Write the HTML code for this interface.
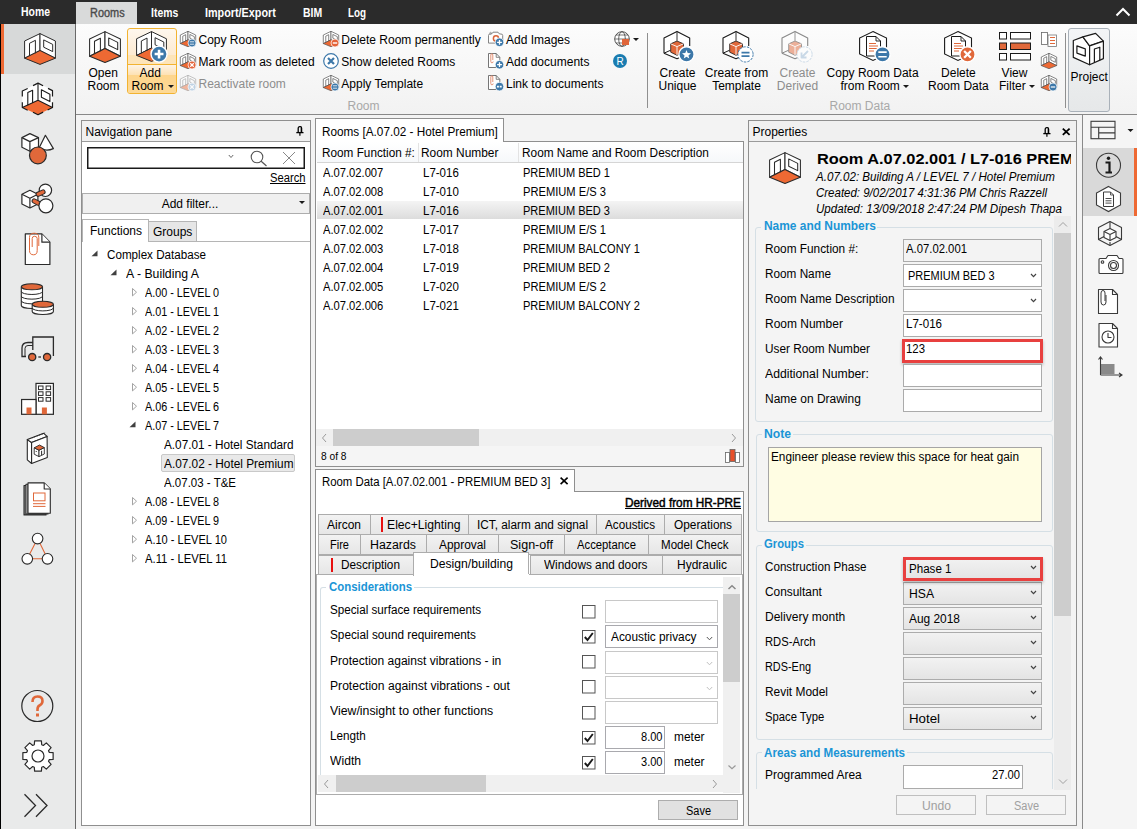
<!DOCTYPE html><html><head><meta charset="utf-8"><style>
html,body{margin:0;padding:0;width:1137px;height:829px;overflow:hidden;background:#f3f3f3;position:relative;font-family:"Liberation Sans",sans-serif;color:#000}
.t{position:absolute;white-space:nowrap;font-family:"Liberation Sans",sans-serif}
svg{overflow:visible}
</style></head><body>
<div style="position:absolute;left:0px;top:0px;width:1137px;height:24px;background:#2b2b2b"></div>
<div style="position:absolute;left:76px;top:2px;width:61px;height:22px;background:#d9dada"></div>
<div class="t" style="left:20.5px;top:4.84px;font-size:12px;line-height:14px;font-weight:bold;color:#fff;transform:scaleX(0.87);transform-origin:0 0">Home</div>
<div class="t" style="left:89.5px;top:5.84px;font-size:12px;line-height:14px;color:#4a4a4a;-webkit-text-stroke:0.35px #4a4a4a;transform:scaleX(0.91);transform-origin:0 0">Rooms</div>
<div class="t" style="left:150.5px;top:5.84px;font-size:12px;line-height:14px;font-weight:bold;color:#fff;transform:scaleX(0.87);transform-origin:0 0">Items</div>
<div class="t" style="left:205px;top:5.84px;font-size:12px;line-height:14px;font-weight:bold;color:#fff;transform:scaleX(0.9);transform-origin:0 0">Import/Export</div>
<div class="t" style="left:302.5px;top:5.84px;font-size:12px;line-height:14px;font-weight:bold;color:#fff;transform:scaleX(0.87);transform-origin:0 0">BIM</div>
<div class="t" style="left:347.5px;top:5.84px;font-size:12px;line-height:14px;font-weight:bold;color:#fff;transform:scaleX(0.82);transform-origin:0 0">Log</div>
<svg style="position:absolute;left:1114px;top:6px" width="18" height="12" viewBox="0 0 18 12"><polyline points="2.5,9.5 9,3 15.5,9.5" fill="none" stroke="#fff" stroke-width="2"/></svg>
<div style="position:absolute;left:0px;top:24px;width:75px;height:805px;background:#e9eaea"></div>
<div style="position:absolute;left:0px;top:24px;width:1px;height:805px;background:#000"></div>
<div style="position:absolute;left:75px;top:24px;width:1px;height:805px;background:#6a6a6a"></div>
<div style="position:absolute;left:1px;top:24px;width:74px;height:50px;background:#d7d9d9"></div>
<div style="position:absolute;left:1px;top:24px;width:3px;height:50px;background:#ee6933"></div>
<div style="position:absolute;left:76px;top:24px;width:1061px;height:90px;background:linear-gradient(#fcfcfc,#f2f2f2)"></div>
<div style="position:absolute;left:76px;top:114px;width:1061px;height:1px;background:#888"></div>
<svg style="position:absolute;left:89px;top:31px" width="32" height="32" viewBox="0 0 32 32"><g opacity="1" stroke-linejoin="round"><polygon points="0.6,8 16,0.6 16,17.5 0.6,25.2" fill="#fff" stroke="#2a2a2a" stroke-width="1.05"/><polygon points="16,0.6 31.4,8 31.4,25.2 16,17.5" fill="#fff" stroke="#2a2a2a" stroke-width="1.05"/><polygon points="0.6,25.2 16,17.5 31.4,25.2 16,31.4" fill="#ee6933" stroke="#2a2a2a" stroke-width="1.05"/><polyline points="5.5,23 5.5,10.3 11.4,7.3 11.4,20.3" fill="none" stroke="#2a2a2a" stroke-width="1.05"/><polygon points="19.7,6.9 28.7,11.4 28.7,18.6 19.7,14.2" fill="none" stroke="#2a2a2a" stroke-width="1.05"/></g></svg>
<div class="t" style="left:88.5px;top:65.84px;font-size:12px;line-height:14px;">Open</div>
<div class="t" style="left:87.5px;top:78.84px;font-size:12px;line-height:14px;">Room</div>
<div style="position:absolute;left:127px;top:28px;width:50px;height:66px;border:1px solid #f2b331;border-radius:3px;box-sizing:border-box;background:linear-gradient(#fef7ee 0%,#fdebd2 40%,#fde4b8 41%,#fde7c2 100%)"></div>
<div style="position:absolute;left:128px;top:64px;width:48px;height:1px;background:#f2b331"></div>
<div style="position:absolute;left:128px;top:65px;width:48px;height:28px;background:linear-gradient(#fdf3e6 0%,#fde2b4 35%,#fdd58c 36%,#fdd996 100%);border-radius:0 0 2px 2px"></div>
<svg style="position:absolute;left:136px;top:31px" width="31" height="31" viewBox="0 0 32 32"><g opacity="1" stroke-linejoin="round"><polygon points="0.6,8 16,0.6 16,17.5 0.6,25.2" fill="#fff" stroke="#2a2a2a" stroke-width="1.03"/><polygon points="16,0.6 31.4,8 31.4,25.2 16,17.5" fill="#fff" stroke="#2a2a2a" stroke-width="1.03"/><polygon points="0.6,25.2 16,17.5 31.4,25.2 16,31.4" fill="#ee6933" stroke="#2a2a2a" stroke-width="1.03"/><polyline points="5.5,23 5.5,10.3 11.4,7.3 11.4,20.3" fill="none" stroke="#2a2a2a" stroke-width="1.03"/><polygon points="19.7,6.9 28.7,11.4 28.7,18.6 19.7,14.2" fill="none" stroke="#2a2a2a" stroke-width="1.03"/><circle cx="23.8" cy="23.8" r="8.3" fill="#3d78a9" stroke="#fff" stroke-width="1.49"/><path d="M19.235,23.8H28.365000000000002M23.8,19.235V28.365000000000002" stroke="#fff" stroke-width="2.66"/></g></svg>
<div class="t" style="left:139.5px;top:65.84px;font-size:12px;line-height:14px;">Add</div>
<div class="t" style="left:131.5px;top:78.84px;font-size:12px;line-height:14px;">Room</div>
<svg style="position:absolute;left:167.5px;top:85px" width="6" height="4" viewBox="0 0 6 4"><polygon points="0,0 6,0 3,3" fill="#1a1a1a"/></svg>
<svg style="position:absolute;left:180px;top:31px" width="16" height="16" viewBox="0 0 32 32"><g opacity="1" stroke-linejoin="round"><polygon points="0.6,8 16,0.6 16,17.5 0.6,25.2" fill="#fff" stroke="#555" stroke-width="1.40"/><polygon points="16,0.6 31.4,8 31.4,25.2 16,17.5" fill="#fff" stroke="#555" stroke-width="1.40"/><polygon points="0.6,25.2 16,17.5 31.4,25.2 16,31.4" fill="#ee6933" stroke="#555" stroke-width="1.40"/><polyline points="5.5,23 5.5,10.3 11.4,7.3 11.4,20.3" fill="none" stroke="#555" stroke-width="1.40"/><polygon points="19.7,6.9 28.7,11.4 28.7,18.6 19.7,14.2" fill="none" stroke="#555" stroke-width="1.40"/><circle cx="24" cy="24" r="8" fill="#3d78a9" stroke="#fff" stroke-width="1.44"/><path d="M19.6,21.6H28.4M19.6,26.4H28.4" stroke="#fff" stroke-width="1.60"/></g></svg>
<div class="t" style="left:198.5px;top:32.84px;font-size:12px;line-height:14px;">Copy Room</div>
<svg style="position:absolute;left:180px;top:53px" width="16" height="16" viewBox="0 0 32 32"><g opacity="1" stroke-linejoin="round"><polygon points="0.6,8 16,0.6 16,17.5 0.6,25.2" fill="#fff" stroke="#555" stroke-width="1.40"/><polygon points="16,0.6 31.4,8 31.4,25.2 16,17.5" fill="#fff" stroke="#555" stroke-width="1.40"/><polygon points="0.6,25.2 16,17.5 31.4,25.2 16,31.4" fill="#ee6933" stroke="#555" stroke-width="1.40"/><polyline points="5.5,23 5.5,10.3 11.4,7.3 11.4,20.3" fill="none" stroke="#555" stroke-width="1.40"/><polygon points="19.7,6.9 28.7,11.4 28.7,18.6 19.7,14.2" fill="none" stroke="#555" stroke-width="1.40"/><circle cx="24" cy="24" r="8" fill="#e4643a" stroke="#fff" stroke-width="1.44"/><path d="M20.48,20.48L27.52,27.52M27.52,20.48L20.48,27.52" stroke="#fff" stroke-width="2.40"/></g></svg>
<div class="t" style="left:198.5px;top:54.84px;font-size:12px;line-height:14px;">Mark room as deleted</div>
<svg style="position:absolute;left:180px;top:75px" width="16" height="16" viewBox="0 0 32 32"><g opacity="0.45" stroke-linejoin="round"><polygon points="0.6,8 16,0.6 16,17.5 0.6,25.2" fill="#fff" stroke="#555" stroke-width="1.40"/><polygon points="16,0.6 31.4,8 31.4,25.2 16,17.5" fill="#fff" stroke="#555" stroke-width="1.40"/><polygon points="0.6,25.2 16,17.5 31.4,25.2 16,31.4" fill="#ee6933" stroke="#555" stroke-width="1.40"/><polyline points="5.5,23 5.5,10.3 11.4,7.3 11.4,20.3" fill="none" stroke="#555" stroke-width="1.40"/><polygon points="19.7,6.9 28.7,11.4 28.7,18.6 19.7,14.2" fill="none" stroke="#555" stroke-width="1.40"/><circle cx="24" cy="24" r="8" fill="#7da9d1" stroke="#fff" stroke-width="1.44"/><path d="M20.48,20.48L27.52,27.52M27.52,20.48L20.48,27.52" stroke="#fff" stroke-width="2.40"/></g></svg>
<div class="t" style="left:198.5px;top:76.84px;font-size:12px;line-height:14px;color:#8d8d8d">Reactivate room</div>
<svg style="position:absolute;left:323px;top:31px" width="16" height="16" viewBox="0 0 32 32"><g opacity="1" stroke-linejoin="round"><polygon points="0.6,8 16,0.6 16,17.5 0.6,25.2" fill="#fff" stroke="#555" stroke-width="1.40"/><polygon points="16,0.6 31.4,8 31.4,25.2 16,17.5" fill="#fff" stroke="#555" stroke-width="1.40"/><polygon points="0.6,25.2 16,17.5 31.4,25.2 16,31.4" fill="#ee6933" stroke="#555" stroke-width="1.40"/><polyline points="5.5,23 5.5,10.3 11.4,7.3 11.4,20.3" fill="none" stroke="#555" stroke-width="1.40"/><polygon points="19.7,6.9 28.7,11.4 28.7,18.6 19.7,14.2" fill="none" stroke="#555" stroke-width="1.40"/><circle cx="24" cy="24" r="8" fill="#e4643a" stroke="#fff" stroke-width="1.44"/><path d="M19.6,24H28.4" stroke="#fff" stroke-width="2.80"/></g></svg>
<div class="t" style="left:341.3px;top:32.84px;font-size:12px;line-height:14px;">Delete Room permanently</div>
<svg style="position:absolute;left:323px;top:53px" width="16" height="16" viewBox="0 0 16 16"><circle cx="8" cy="8" r="7.3" fill="#fff" stroke="#3d78a9" stroke-width="1.2"/><path d="M5,5L11,11M11,5L5,11" stroke="#3d78a9" stroke-width="2.2"/></svg>
<div class="t" style="left:341.3px;top:54.84px;font-size:12px;line-height:14px;">Show deleted Rooms</div>
<svg style="position:absolute;left:323px;top:75px" width="16" height="16" viewBox="0 0 32 32"><g opacity="1" stroke-linejoin="round"><polygon points="0.6,8 16,0.6 16,17.5 0.6,25.2" fill="#fff" stroke="#555" stroke-width="1.40"/><polygon points="16,0.6 31.4,8 31.4,25.2 16,17.5" fill="#fff" stroke="#555" stroke-width="1.40"/><polygon points="0.6,25.2 16,17.5 31.4,25.2 16,31.4" fill="#ee6933" stroke="#555" stroke-width="1.40"/><polyline points="5.5,23 5.5,10.3 11.4,7.3 11.4,20.3" fill="none" stroke="#555" stroke-width="1.40"/><polygon points="19.7,6.9 28.7,11.4 28.7,18.6 19.7,14.2" fill="none" stroke="#555" stroke-width="1.40"/><circle cx="24" cy="24" r="8" fill="#3d78a9" stroke="#fff" stroke-width="1.44"/><path d="M19.6,21.6H28.4M19.6,26.4H28.4" stroke="#fff" stroke-width="1.60"/></g></svg>
<div class="t" style="left:341.3px;top:76.84px;font-size:12px;line-height:14px;">Apply Template</div>
<div class="t" style="left:347.5px;top:98.84px;font-size:12px;line-height:14px;color:#a8a8a8">Room</div>
<svg style="position:absolute;left:488px;top:31px" width="16" height="16" viewBox="0 0 16 16"><path d="M0.5,4.5Q0.5,3 2,3H3.5L5,1.2H10L11.5,3H13Q14.7,3 14.7,4.5V12.1H0.5Z" fill="#fff" stroke="#777" stroke-width="0.9"/><circle cx="2.6" cy="2.2" r="0.9" fill="none" stroke="#777" stroke-width="0.6"/><circle cx="8" cy="7.4" r="2.6" fill="none" stroke="#d9663b" stroke-width="1.5"/><circle cx="11.5" cy="11.3" r="4.3" fill="#3d78a9" stroke="#fff" stroke-width="0.8"/><path d="M9.1,11.3H13.9M11.5,8.9V13.700000000000001" stroke="#fff" stroke-width="1.3"/></svg>
<div class="t" style="left:506px;top:32.84px;font-size:12px;line-height:14px;">Add Images</div>
<svg style="position:absolute;left:488px;top:53px" width="16" height="16" viewBox="0 0 16 16"><path d="M0.5,0.5H8.2L11.8,4.3V14.5H0.5Z" fill="#fff" stroke="#666" stroke-width="0.9"/><path d="M8.2,0.5V4.3H11.8" fill="none" stroke="#666" stroke-width="0.8"/><path d="M4.8,7V2Q4.8,0.8 3.9,0.8Q2.8,0.8 2.8,2V8.5Q2.8,9.8 3.9,9.8Q5.2,9.8 5.2,8.5" fill="none" stroke="#e0886a" stroke-width="0.9"/><circle cx="11.5" cy="11.7" r="4.3" fill="#3d78a9" stroke="#fff" stroke-width="0.8"/><path d="M9.1,11.7H13.9M11.5,9.299999999999999V14.1" stroke="#fff" stroke-width="1.3"/></svg>
<div class="t" style="left:506px;top:54.84px;font-size:12px;line-height:14px;">Add documents</div>
<svg style="position:absolute;left:488px;top:75px" width="16" height="16" viewBox="0 0 16 16"><path d="M0.5,0.5H8.2L11.8,4.3V14.5H0.5Z" fill="#fff" stroke="#666" stroke-width="0.9"/><path d="M8.2,0.5V4.3H11.8" fill="none" stroke="#666" stroke-width="0.8"/><path d="M4.8,7V2Q4.8,0.8 3.9,0.8Q2.8,0.8 2.8,2V8.5Q2.8,9.8 3.9,9.8Q5.2,9.8 5.2,8.5" fill="none" stroke="#e0886a" stroke-width="0.9"/><circle cx="11.5" cy="11.6" r="4.3" fill="#3d78a9" stroke="#fff" stroke-width="0.8"/><path d="M8.9,11.6H14.1" stroke="#fff" stroke-width="1.6" stroke-dasharray="2,0.8"/></svg>
<div class="t" style="left:506px;top:76.84px;font-size:12px;line-height:14px;">Link to documents</div>
<svg style="position:absolute;left:614px;top:31px" width="16" height="16" viewBox="0 0 16 16"><circle cx="8" cy="8" r="7.3" fill="#fff" stroke="#444" stroke-width="0.9"/><ellipse cx="8" cy="8" rx="3.3" ry="7.3" fill="none" stroke="#444" stroke-width="0.8"/><path d="M0.7,8H15.3M2,4H14M2,12H14" stroke="#444" stroke-width="0.7"/><rect x="8" y="8" width="7" height="6" fill="#e0653a"/></svg>
<svg style="position:absolute;left:633px;top:38px" width="6" height="4" viewBox="0 0 6 4"><polygon points="0,0 6,0 3,3" fill="#1a1a1a"/></svg>
<svg style="position:absolute;left:613px;top:54px" width="14" height="14" viewBox="0 0 14 14"><circle cx="7" cy="7" r="7" fill="#1a7cb0"/><text x="7" y="11" text-anchor="middle" font-family="Liberation Sans" font-size="10" fill="#fff">R</text></svg>
<div style="position:absolute;left:647px;top:33px;width:1px;height:75px;background:#8f8f8f"></div>
<svg style="position:absolute;left:663px;top:31px" width="32" height="32" viewBox="0 0 32 32"><g opacity="1" stroke-linejoin="round"><polygon points="1,22.2 1,6.9 14,0.4 26.7,7.1 26.7,22 14,27.8" fill="#fff" stroke="none"/><polyline points="1,22.2 1,6.9 14,0.4 26.7,7.1 26.7,15" fill="none" stroke="#1a1a1a" stroke-width="1.1"/><path d="M1,22.2L14,27.8L19,25.5" fill="none" stroke="#1a1a1a" stroke-width="1.1"/><path d="M14,0.4V9.8" stroke="#333" stroke-width="1"/><path d="M1,22.2L7.7,19.2" stroke="#1a1a1a" stroke-width="1"/><polygon points="14,10 20.5,12.8 20.5,21.2 14,24.3 7.7,21.2 7.7,12.8" fill="#e0683a" stroke="#1a1a1a" stroke-width="0.8"/><path d="M7.7,12.8L14,15.6L20.5,12.8M14,15.6V24" fill="none" stroke="#fff" stroke-width="0.9"/><circle cx="23.5" cy="23.4" r="7.6" fill="#3d78a9" stroke="#fff" stroke-width="1.37"/><polygon points="23.50,19.07 24.71,22.12 27.98,22.32 25.45,24.41 26.27,27.59 23.50,25.83 20.73,27.59 21.55,24.41 19.02,22.32 22.29,22.12" fill="#fff"/></g></svg>
<div class="t" style="left:647.5px;width:60px;text-align:center;top:65.84px;font-size:12px;line-height:14px;">Create</div>
<div class="t" style="left:647.5px;width:60px;text-align:center;top:78.84px;font-size:12px;line-height:14px;">Unique</div>
<svg style="position:absolute;left:722px;top:31px" width="32" height="32" viewBox="0 0 32 32"><g opacity="1" stroke-linejoin="round"><polygon points="1,22.2 1,6.9 14,0.4 26.7,7.1 26.7,22 14,27.8" fill="#fff" stroke="none"/><polyline points="1,22.2 1,6.9 14,0.4 26.7,7.1 26.7,15" fill="none" stroke="#1a1a1a" stroke-width="1.1"/><path d="M1,22.2L14,27.8L19,25.5" fill="none" stroke="#1a1a1a" stroke-width="1.1"/><path d="M14,0.4V9.8" stroke="#333" stroke-width="1"/><path d="M1,22.2L7.7,19.2" stroke="#1a1a1a" stroke-width="1"/><polygon points="14,10 20.5,12.8 20.5,21.2 14,24.3 7.7,21.2 7.7,12.8" fill="#e0683a" stroke="#1a1a1a" stroke-width="0.8"/><path d="M7.7,12.8L14,15.6L20.5,12.8M14,15.6V24" fill="none" stroke="#fff" stroke-width="0.9"/><circle cx="23.5" cy="23.4" r="7.6" fill="#fff" stroke="#3d78a9" stroke-width="1" stroke-dasharray="2.5,1.2"/><path d="M19.5,21.6H27.5M19.5,25.2H27.5" stroke="#3d78a9" stroke-width="1.8"/></g></svg>
<div class="t" style="left:691.5px;width:90px;text-align:center;top:65.84px;font-size:12px;line-height:14px;">Create from</div>
<div class="t" style="left:691.5px;width:90px;text-align:center;top:78.84px;font-size:12px;line-height:14px;">Template</div>
<svg style="position:absolute;left:781px;top:31px" width="32" height="32" viewBox="0 0 32 32"><g opacity="0.5" stroke-linejoin="round"><polygon points="1,22.2 1,6.9 14,0.4 26.7,7.1 26.7,22 14,27.8" fill="#fff" stroke="none"/><polyline points="1,22.2 1,6.9 14,0.4 26.7,7.1 26.7,15" fill="none" stroke="#1a1a1a" stroke-width="1.1"/><path d="M1,22.2L14,27.8L19,25.5" fill="none" stroke="#1a1a1a" stroke-width="1.1"/><path d="M14,0.4V9.8" stroke="#333" stroke-width="1"/><path d="M1,22.2L7.7,19.2" stroke="#1a1a1a" stroke-width="1"/><polygon points="14,10 20.5,12.8 20.5,21.2 14,24.3 7.7,21.2 7.7,12.8" fill="#e0683a" stroke="#1a1a1a" stroke-width="0.8"/><path d="M7.7,12.8L14,15.6L20.5,12.8M14,15.6V24" fill="none" stroke="#fff" stroke-width="0.9"/><circle cx="23.5" cy="23.4" r="7.6" fill="#fff" stroke="#9bbad6" stroke-width="1" stroke-dasharray="2.5,1.2"/><path d="M27,20L21,26M20.5,21.5V26.5H25.5" stroke="#9bbad6" stroke-width="1.8" fill="none"/></g></svg>
<div class="t" style="left:767.5px;width:60px;text-align:center;top:65.84px;font-size:12px;line-height:14px;color:#8d8d8d">Create</div>
<div class="t" style="left:767.5px;width:60px;text-align:center;top:78.84px;font-size:12px;line-height:14px;color:#8d8d8d">Derived</div>
<svg style="position:absolute;left:859px;top:31px" width="32" height="32" viewBox="0 0 32 32"><polygon points="14,0.6 27.5,7 27.5,23 14,29.4 0.6,23 0.6,7" fill="#fff" stroke="#1a1a1a" stroke-width="1.1"/><path d="M7.5,5.5H17L21.5,10V25H7.5Z" fill="#fff" stroke="#1a1a1a" stroke-width="1"/><path d="M17,5.5V10H21.5" fill="none" stroke="#1a1a1a" stroke-width="0.9"/><path d="M10,12.5H17M10,15H19M10,17.5H19M10,20H15" stroke="#e0683a" stroke-width="1"/><circle cx="23.5" cy="23.4" r="7.6" fill="#3d78a9" stroke="#fff" stroke-width="1.37"/><path d="M19.32,21.119999999999997H27.68M19.32,25.68H27.68" stroke="#fff" stroke-width="1.52"/></svg>
<div class="t" style="left:812.6px;width:120px;text-align:center;top:65.84px;font-size:12px;line-height:14px;">Copy Room Data</div>
<div class="t" style="left:840.5px;top:78.84px;font-size:12px;line-height:14px;">from Room</div>
<svg style="position:absolute;left:903px;top:85px" width="6" height="4" viewBox="0 0 6 4"><polygon points="0,0 6,0 3,3" fill="#1a1a1a"/></svg>
<svg style="position:absolute;left:944px;top:31px" width="32" height="32" viewBox="0 0 32 32"><polygon points="14,0.6 27.5,7 27.5,23 14,29.4 0.6,23 0.6,7" fill="#fff" stroke="#1a1a1a" stroke-width="1.1"/><path d="M7.5,5.5H17L21.5,10V25H7.5Z" fill="#fff" stroke="#1a1a1a" stroke-width="1"/><path d="M17,5.5V10H21.5" fill="none" stroke="#1a1a1a" stroke-width="0.9"/><path d="M10,12.5H17M10,15H19M10,17.5H19M10,20H15" stroke="#e0683a" stroke-width="1"/><circle cx="23.5" cy="23.4" r="7.6" fill="#e0683a" stroke="#fff" stroke-width="1.37"/><path d="M20.156,20.055999999999997L26.844,26.744M26.844,20.055999999999997L20.156,26.744" stroke="#fff" stroke-width="2.28"/></svg>
<div class="t" style="left:918.4px;width:80px;text-align:center;top:65.84px;font-size:12px;line-height:14px;">Delete</div>
<div class="t" style="left:918.4px;width:80px;text-align:center;top:78.84px;font-size:12px;line-height:14px;">Room Data</div>
<div class="t" style="left:829.5px;top:98.84px;font-size:12px;line-height:14px;color:#a8a8a8">Room Data</div>
<svg style="position:absolute;left:999px;top:32px" width="32" height="29" viewBox="0 0 32 29"><rect x="0.5" y="0.5" width="7" height="6.5" fill="#fff" stroke="#1a1a1a"/><rect x="11.5" y="0.5" width="20" height="6.5" fill="#fff" stroke="#1a1a1a"/><rect x="0.5" y="11" width="7" height="6.5" fill="#e0683a" stroke="#1a1a1a"/><rect x="11.5" y="11" width="20" height="6.5" fill="#e0683a" stroke="#1a1a1a"/><rect x="0.5" y="21.5" width="7" height="6.5" fill="#fff" stroke="#1a1a1a"/><rect x="11.5" y="21.5" width="20" height="6.5" fill="#fff" stroke="#1a1a1a"/></svg>
<div class="t" style="left:984.5px;width:60px;text-align:center;top:65.84px;font-size:12px;line-height:14px;">View</div>
<div class="t" style="left:999px;top:78.84px;font-size:12px;line-height:14px;">Filter</div>
<svg style="position:absolute;left:1029px;top:85px" width="6" height="4" viewBox="0 0 6 4"><polygon points="0,0 6,0 3,3" fill="#1a1a1a"/></svg>
<svg style="position:absolute;left:1041px;top:32px" width="16" height="15" viewBox="0 0 16 15"><rect x="0.5" y="0.5" width="6" height="12" fill="#fff" stroke="#666" stroke-width="0.8"/><rect x="7" y="3" width="8.5" height="11.5" fill="#fff" stroke="#777" stroke-width="0.8"/><path d="M9,5.5H14M9,8.5H14M9,11.5H14" stroke="#e0683a" stroke-width="1.2"/></svg>
<svg style="position:absolute;left:1041px;top:53px" width="16" height="16" viewBox="0 0 32 32"><g opacity="1" stroke-linejoin="round"><polygon points="0.6,8 16,0.6 16,17.5 0.6,25.2" fill="#fff" stroke="#555" stroke-width="1.40"/><polygon points="16,0.6 31.4,8 31.4,25.2 16,17.5" fill="#fff" stroke="#555" stroke-width="1.40"/><polygon points="0.6,25.2 16,17.5 31.4,25.2 16,31.4" fill="#ee6933" stroke="#555" stroke-width="1.40"/><polyline points="5.5,23 5.5,10.3 11.4,7.3 11.4,20.3" fill="none" stroke="#555" stroke-width="1.40"/><polygon points="19.7,6.9 28.7,11.4 28.7,18.6 19.7,14.2" fill="none" stroke="#555" stroke-width="1.40"/></g></svg>
<svg style="position:absolute;left:1041px;top:75px" width="16" height="16" viewBox="0 0 32 32"><g opacity="1" stroke-linejoin="round"><polygon points="0.6,8 16,0.6 16,17.5 0.6,25.2" fill="#fff" stroke="#555" stroke-width="1.40"/><polygon points="16,0.6 31.4,8 31.4,25.2 16,17.5" fill="#fff" stroke="#555" stroke-width="1.40"/><polygon points="0.6,25.2 16,17.5 31.4,25.2 16,31.4" fill="#ee6933" stroke="#555" stroke-width="1.40"/><polyline points="5.5,23 5.5,10.3 11.4,7.3 11.4,20.3" fill="none" stroke="#555" stroke-width="1.40"/><polygon points="19.7,6.9 28.7,11.4 28.7,18.6 19.7,14.2" fill="none" stroke="#555" stroke-width="1.40"/><circle cx="24" cy="24" r="8" fill="#3d78a9" stroke="#fff" stroke-width="1.44"/><path d="M19.6,24H28.4" stroke="#fff" stroke-width="2.40"/></g></svg>
<div style="position:absolute;left:1065px;top:33px;width:1px;height:75px;background:#8f8f8f"></div>
<div style="position:absolute;left:1068px;top:28px;width:42px;height:84px;border:1px solid #a9b1b9;border-radius:3px;box-sizing:border-box;background:linear-gradient(#f3f5f7,#eaeced 60%,#e6e8e9)"></div>
<svg style="position:absolute;left:1073px;top:33px" width="32" height="32" viewBox="0 0 32 32"><g stroke="#1a1a1a" stroke-width="1.2" fill="#fff" stroke-linejoin="round"><polygon points="0.3,7.5 9.9,3.9 16.6,12.9 16.6,31.7 0.3,24.4"/><polygon points="9.9,3.9 22.6,0.3 30.4,8.1 16.6,12.9"/><polygon points="16.6,12.9 30.4,8.1 30.4,25.6 16.6,31.7"/><polygon points="3.9,12.9 12.3,15.9 12.3,23.1 3.9,20.1" fill="none"/><polyline points="21.4,29.5 21.4,16 26.8,14.2 26.8,27.3" fill="none"/></g></svg>
<div class="t" style="left:1070.5px;top:69.84px;font-size:12px;line-height:14px;">Project</div>
<svg style="position:absolute;left:23.5px;top:32.5px" width="32" height="32" viewBox="0 0 32 32"><g opacity="1" stroke-linejoin="round"><polygon points="0.6,8 16,0.6 16,17.5 0.6,25.2" fill="#fff" stroke="#2a2a2a" stroke-width="1.00"/><polygon points="16,0.6 31.4,8 31.4,25.2 16,17.5" fill="#fff" stroke="#2a2a2a" stroke-width="1.00"/><polygon points="0.6,25.2 16,17.5 31.4,25.2 16,31.4" fill="#ee6933" stroke="#2a2a2a" stroke-width="1.00"/><polyline points="5.5,23 5.5,10.3 11.4,7.3 11.4,20.3" fill="none" stroke="#2a2a2a" stroke-width="1.00"/><polygon points="19.7,6.9 28.7,11.4 28.7,18.6 19.7,14.2" fill="none" stroke="#2a2a2a" stroke-width="1.00"/></g></svg>
<svg style="position:absolute;left:18px;top:78px" width="40" height="40" viewBox="0 0 40 40"><g stroke-linejoin="round" stroke-linecap="butt"><polygon points="4.3,13 20,5.1 34.5,12.6 34.5,29.5 20,36.7 4.3,29.5" fill="#fff"/><polygon points="4.3,29.5 20,22.3 34.5,29.5 20,36.7" fill="#ee6933"/><path d="M15,7.6L20,5.1L25.1,7.8M9.7,10.5L4.3,13V18.6M30,10.4L34.5,12.6V18.6M4.3,24.2V29.5L9.7,32.2M34.5,24.2V29.5L29.6,32M15,34.2L20,36.7L25.1,34.1" fill="none" stroke="#1a1a1a" stroke-width="1.2"/><path d="M20,5.1V22.3M4.3,29.5L20,22.3L34.5,29.5" fill="none" stroke="#1a1a1a" stroke-width="1.1"/><path d="M9.8,27.3V14.6L14.6,12.3V25" fill="none" stroke="#1a1a1a" stroke-width="1.1"/><polygon points="23.4,11.8 31.9,16.2 31.9,23.6 23.4,19.2" fill="none" stroke="#1a1a1a" stroke-width="1.1"/></g></svg>
<svg style="position:absolute;left:15px;top:125px" width="45" height="45" viewBox="0 0 45 45"><g stroke="#2a2a2a" stroke-width="1.2" stroke-linejoin="round"><polygon points="14.9,8.6 23.5,12.6 23.5,22.3 14.9,26.3 6.9,22.3 6.9,12.6" fill="#fff"/><path d="M6.9,12.6L14.9,16.6L23.5,12.6M14.9,16.6V26.3" fill="none"/><path d="M30.4,10.3L24.2,22.8Q31,27 38.4,23.6Z" fill="#fff"/><circle cx="22.9" cy="30.4" r="8.4" fill="#e0683a"/></g></svg>
<svg style="position:absolute;left:15px;top:125px" width="45" height="95" viewBox="0 0 45 95"><g stroke="#2a2a2a" stroke-width="1.2" stroke-linejoin="round"><polygon points="14.9,65.3 22.9,69.3 22.9,79 14.9,83 6.9,79 6.9,69.3" fill="#fff"/><path d="M6.9,69.3L14.9,73.3L22.9,69.3M14.9,73.3V83" fill="none"/><circle cx="30.4" cy="65.3" r="6.2" fill="#fff"/><path d="M23.2,69.2L28,67M19.2,76L24.5,78.8" stroke="#2a2a2a" stroke-width="5.2" stroke-linecap="round"/><path d="M23.2,69.2L28,67M19.2,76L24.5,78.8" stroke="#e0683a" stroke-width="3.2" stroke-linecap="round"/><circle cx="30.9" cy="80.8" r="7" fill="#fff"/></g></svg>
<svg style="position:absolute;left:15px;top:225px" width="45" height="45" viewBox="0 0 45 45"><g stroke="#2a2a2a" stroke-width="1.2" stroke-linejoin="round"><path d="M10.3,8.9H26.9L34.9,17.2V39.5H10.3Z" fill="#fff"/><path d="M26.9,8.9V17.2H34.9" fill="#fff"/></g><path d="M23.8,21V12.5Q23.8,8.2 19.2,8.2Q14.5,8.2 14.5,12.5V25.5Q14.5,29.8 18.6,29.8Q22.2,29.8 22.2,25.5V13.5Q22.2,11.3 19.5,11.3Q17.2,11.3 17.2,13.5V22" fill="none" stroke="#e0683a" stroke-width="1"/></svg>
<svg style="position:absolute;left:15px;top:225px" width="45" height="95" viewBox="0 0 45 95"><path d="M6.299999999999999,61.8V80.5A10.6,3 0 0 0 27.5,80.5V61.8" fill="#fff" stroke="#2a2a2a" stroke-width="1.1"/><path d="M6.299999999999999,66.475A10.6,3 0 0 0 27.5,66.475" fill="none" stroke="#2a2a2a" stroke-width="1"/><path d="M6.299999999999999,71.15A10.6,3 0 0 0 27.5,71.15" fill="none" stroke="#2a2a2a" stroke-width="1"/><path d="M6.299999999999999,75.825A10.6,3 0 0 0 27.5,75.825" fill="none" stroke="#2a2a2a" stroke-width="1"/><ellipse cx="16.9" cy="61.8" rx="10.6" ry="3" fill="#e0683a" stroke="#2a2a2a" stroke-width="1.1"/><path d="M17.200000000000003,79.3V86.5A10.6,3 0 0 0 38.4,86.5V79.3" fill="#fff" stroke="#2a2a2a" stroke-width="1.1"/><path d="M17.200000000000003,82.9A10.6,3 0 0 0 38.4,82.9" fill="none" stroke="#2a2a2a" stroke-width="1"/><ellipse cx="27.8" cy="79.3" rx="10.6" ry="3" fill="#e0683a" stroke="#2a2a2a" stroke-width="1.1"/></svg>
<svg style="position:absolute;left:15px;top:325px" width="45" height="45" viewBox="0 0 45 45"><g stroke="#2a2a2a" stroke-width="1.3" fill="none"><path d="M17.8,25V12H38.4V31"/><path d="M17.8,17.5H13Q7,17.5 7,23V31.5H11"/><path d="M23.3,32H26"/><path d="M10,31.5V23.5Q10,20.5 13,20.5H17.8" stroke-width="1"/><circle cx="17.2" cy="32.1" r="3.6" fill="#e0683a"/><circle cx="32.1" cy="32.1" r="3.6" fill="#e0683a"/></g></svg>
<svg style="position:absolute;left:15px;top:325px" width="45" height="95" viewBox="0 0 45 95"><g stroke="#2a2a2a" stroke-width="1.2"><rect x="21" y="58.4" width="17.4" height="30.9" fill="#fff"/><rect x="6.6" y="74.5" width="14.4" height="14.8" fill="#fff"/><rect x="23.5" y="61.0" width="4.5" height="3.6" fill="#fff" stroke-width="1"/><rect x="31.1" y="61.0" width="4.5" height="3.6" fill="#fff" stroke-width="1"/><rect x="23.5" y="66.8" width="4.5" height="3.6" fill="#fff" stroke-width="1"/><rect x="31.1" y="66.8" width="4.5" height="3.6" fill="#fff" stroke-width="1"/><rect x="23.5" y="72.6" width="4.5" height="3.6" fill="#fff" stroke-width="1"/><rect x="31.1" y="72.6" width="4.5" height="3.6" fill="#fff" stroke-width="1"/></g><rect x="11.5" y="82.5" width="5" height="6.8" fill="#e0683a"/><rect x="26.9" y="82.5" width="5" height="6.8" fill="#e0683a"/></svg>
<svg style="position:absolute;left:15px;top:425px" width="45" height="45" viewBox="0 0 45 45"><g stroke="#2a2a2a" stroke-width="1.1" stroke-linejoin="round"><polygon points="12.3,14.6 16.6,17.5 16.6,38.5 12.3,34.8" fill="#fff"/><polygon points="12.3,14.6 28.7,8.3 32.1,11.4 16.6,17.5" fill="#fff"/><path d="M14.5,13.8L30.2,7.9M16.6,13L29.6,8.1" fill="none" stroke-width="0.6" stroke-dasharray="1.6,1"/><polygon points="16.6,17.5 32.1,11.4 32.3,32.4 16.6,38.5" fill="#fff"/><polygon points="19.2,22.8 24,25.2 24,31.6 19.2,29.2" fill="#fff" stroke-width="0.9"/><polygon points="24,25.2 29.3,22.6 29.3,29 24,31.6" fill="#fff" stroke-width="0.9"/><polygon points="19.2,22.8 24.5,20 29.3,22.6 24,25.2" fill="#e0683a" stroke-width="0.9"/><path d="M26.6,30.2V25.8" stroke-width="1"/><circle cx="21.2" cy="26.5" r="0.6" fill="#1a1a1a" stroke="none"/></g></svg>
<svg style="position:absolute;left:15px;top:425px" width="45" height="95" viewBox="0 0 45 95"><g stroke="#2a2a2a" stroke-width="1.1" stroke-linejoin="round"><path d="M9,60.5H13V87.5H31V89.9H9Z" fill="#888"/><path d="M11,59.3H13V88.5H33V89H11Z" fill="#fff"/><path d="M13,57.9H29.2L35.3,64V88.3H13Z" fill="#fff"/><path d="M29.2,57.9V64H35.3" fill="#fff"/></g><rect x="18.5" y="68" width="11.5" height="7.8" fill="none" stroke="#e0683a" stroke-width="1"/><path d="M18,78.7H30.5M18,81.4H30.5" stroke="#e0683a" stroke-width="1"/></svg>
<svg style="position:absolute;left:15px;top:425px" width="45" height="145" viewBox="0 0 45 145"><path d="M22.6,113.6L12.3,133.8H32.5Z" fill="none" stroke="#e0683a" stroke-width="1.1"/><g stroke="#2a2a2a" stroke-width="1.1" fill="#fff"><circle cx="22.6" cy="113.6" r="5.3"/><circle cx="12.3" cy="133.8" r="5.3"/><circle cx="32.5" cy="133.8" r="5.3"/></g></svg>
<svg style="position:absolute;left:21px;top:690px" width="33" height="33" viewBox="0 0 33 33"><circle cx="16.3" cy="16" r="15.5" fill="none" stroke="#2a2a2a" stroke-width="1.2"/><path d="M11.5,12Q11.5,6.5 16.5,6.5Q21.5,6.5 21.5,11Q21.5,14 18.5,15.5Q16.5,16.5 16.5,19.5V21" fill="none" stroke="#e0683a" stroke-width="2.6"/><rect x="15" y="23.5" width="3" height="3" fill="#e0683a"/></svg>
<svg style="position:absolute;left:22px;top:740px" width="32" height="32" viewBox="0 0 32 32"><polygon points="31.13,12.62 31.13,19.38 27.20,19.71 26.54,21.30 29.09,24.30 24.30,29.09 21.30,26.54 19.71,27.20 19.38,31.13 12.62,31.13 12.29,27.20 10.70,26.54 7.70,29.09 2.91,24.30 5.46,21.30 4.80,19.71 0.87,19.38 0.87,12.62 4.80,12.29 5.46,10.70 2.91,7.70 7.70,2.91 10.70,5.46 12.29,4.80 12.62,0.87 19.38,0.87 19.71,4.80 21.30,5.46 24.30,2.91 29.09,7.70 26.54,10.70 27.20,12.29" fill="#fff" stroke="#2a2a2a" stroke-width="1.2" stroke-linejoin="round"/><circle cx="16" cy="16" r="6" fill="none" stroke="#2a2a2a" stroke-width="1.2"/></svg>
<svg style="position:absolute;left:23px;top:793px" width="26" height="26" viewBox="0 0 26 26"><path d="M1.5,1.2L12.5,12.5L1.5,23.8M13,1.2L24,12.5L13,23.8" fill="none" stroke="#2a2a2a" stroke-width="1.3"/></svg>
<div style="position:absolute;left:81px;top:120px;width:230px;height:706px;background:#fff;border:1px solid #8f8f8f;box-sizing:border-box"></div>
<div style="position:absolute;left:82px;top:121px;width:228px;height:21px;background:#f0f0f0;border-bottom:1px solid #9a9a9a;box-sizing:border-box"></div>
<div class="t" style="left:85.5px;top:124.84px;font-size:12px;line-height:14px;">Navigation pane</div>
<svg style="position:absolute;left:295.5px;top:126px" width="8" height="10" viewBox="0 0 8 10"><path d="M2.2,6.5V2.3Q2.2,0.7 3.8,0.7H4.4Q5.6,0.7 5.6,2.3V6.5" fill="none" stroke="#000" stroke-width="1.3"/><path d="M5.3,1.5V6.5" stroke="#000" stroke-width="1.2"/><path d="M0.3,6.6H7.5" stroke="#000" stroke-width="1.3"/><path d="M3.9,6.6V9.8" stroke="#000" stroke-width="1.2"/></svg>
<div style="position:absolute;left:87px;top:147px;width:218px;height:22px;background:#fff;border:1px solid #1a1a1a;box-shadow:inset 0 0 0 0.5px #1a1a1a;box-sizing:border-box"></div>
<svg style="position:absolute;left:228px;top:154px" width="6" height="5" viewBox="0 0 6 5"><polyline points="0.8,1 3,3.5 5.2,1" fill="none" stroke="#555" stroke-width="0.9"/></svg>
<svg style="position:absolute;left:250px;top:150px" width="18" height="17" viewBox="0 0 18 17"><circle cx="7" cy="7" r="5.8" fill="none" stroke="#555" stroke-width="1.1"/><path d="M11.2,11.2L16.5,16" stroke="#555" stroke-width="1.2"/></svg>
<svg style="position:absolute;left:282px;top:151px" width="14" height="14" viewBox="0 0 14 14"><path d="M1,1L13,13M13,1L1,13" stroke="#888" stroke-width="1"/></svg>
<div class="t" style="left:269.5px;top:170.84px;font-size:12px;line-height:14px;text-decoration:underline;transform:scaleX(0.9334);transform-origin:0 0">Search</div>
<div style="position:absolute;left:82px;top:193px;width:228px;height:21px;background:#f0f0f0;border:1px solid #adadad;box-sizing:border-box"></div>
<div class="t" style="left:130.0px;width:120px;text-align:center;top:196.84px;font-size:12px;line-height:14px;">Add filter...</div>
<svg style="position:absolute;left:299px;top:201px" width="6" height="4" viewBox="0 0 6 4"><polygon points="0,0 6,0 3,3" fill="#1a1a1a"/></svg>
<div style="position:absolute;left:82px;top:241px;width:228px;height:1px;background:#b5b5b5"></div>
<div style="position:absolute;left:148px;top:221px;width:49px;height:21px;background:#e6e6e6;border:1px solid #b5b5b5;box-sizing:border-box"></div>
<div style="position:absolute;left:82px;top:219px;width:67px;height:23px;background:#fff;border:1px solid #b5b5b5;border-bottom:none;box-sizing:border-box"></div>
<div class="t" style="left:90px;top:223.84px;font-size:12px;line-height:14px;">Functions</div>
<div class="t" style="left:153px;top:224.84px;font-size:12px;line-height:14px;">Groups</div>
<svg style="position:absolute;left:91px;top:250.2px" width="8" height="8" viewBox="0 0 8 8"><polygon points="6.5,0.5 6.5,6.3 0.5,6.3" fill="#404040"/></svg>
<div class="t" style="left:106.5px;top:247.84px;font-size:12px;line-height:14px;;transform:scaleX(0.9700);transform-origin:0 0">Complex Database</div>
<svg style="position:absolute;left:110px;top:269.2px" width="8" height="8" viewBox="0 0 8 8"><polygon points="6.5,0.5 6.5,6.3 0.5,6.3" fill="#404040"/></svg>
<div class="t" style="left:125.5px;top:266.84px;font-size:12px;line-height:14px;;transform:scaleX(1.0225);transform-origin:0 0">A - Building A</div>
<svg style="position:absolute;left:132px;top:288.2px" width="6" height="10" viewBox="0 0 6 10"><polygon points="0.5,0.5 4.5,4.2 0.5,7.9" fill="#fff" stroke="#999" stroke-width="0.9"/></svg>
<div class="t" style="left:144.5px;top:285.84px;font-size:12px;line-height:14px;;transform:scaleX(0.8994);transform-origin:0 0">A.00 - LEVEL 0</div>
<svg style="position:absolute;left:132px;top:307.2px" width="6" height="10" viewBox="0 0 6 10"><polygon points="0.5,0.5 4.5,4.2 0.5,7.9" fill="#fff" stroke="#999" stroke-width="0.9"/></svg>
<div class="t" style="left:144.5px;top:304.84px;font-size:12px;line-height:14px;;transform:scaleX(0.8994);transform-origin:0 0">A.01 - LEVEL 1</div>
<svg style="position:absolute;left:132px;top:326.2px" width="6" height="10" viewBox="0 0 6 10"><polygon points="0.5,0.5 4.5,4.2 0.5,7.9" fill="#fff" stroke="#999" stroke-width="0.9"/></svg>
<div class="t" style="left:144.5px;top:323.84px;font-size:12px;line-height:14px;;transform:scaleX(0.8994);transform-origin:0 0">A.02 - LEVEL 2</div>
<svg style="position:absolute;left:132px;top:345.2px" width="6" height="10" viewBox="0 0 6 10"><polygon points="0.5,0.5 4.5,4.2 0.5,7.9" fill="#fff" stroke="#999" stroke-width="0.9"/></svg>
<div class="t" style="left:144.5px;top:342.84px;font-size:12px;line-height:14px;;transform:scaleX(0.8994);transform-origin:0 0">A.03 - LEVEL 3</div>
<svg style="position:absolute;left:132px;top:364.2px" width="6" height="10" viewBox="0 0 6 10"><polygon points="0.5,0.5 4.5,4.2 0.5,7.9" fill="#fff" stroke="#999" stroke-width="0.9"/></svg>
<div class="t" style="left:144.5px;top:361.84px;font-size:12px;line-height:14px;;transform:scaleX(0.8994);transform-origin:0 0">A.04 - LEVEL 4</div>
<svg style="position:absolute;left:132px;top:383.2px" width="6" height="10" viewBox="0 0 6 10"><polygon points="0.5,0.5 4.5,4.2 0.5,7.9" fill="#fff" stroke="#999" stroke-width="0.9"/></svg>
<div class="t" style="left:144.5px;top:380.84px;font-size:12px;line-height:14px;;transform:scaleX(0.8994);transform-origin:0 0">A.05 - LEVEL 5</div>
<svg style="position:absolute;left:132px;top:402.2px" width="6" height="10" viewBox="0 0 6 10"><polygon points="0.5,0.5 4.5,4.2 0.5,7.9" fill="#fff" stroke="#999" stroke-width="0.9"/></svg>
<div class="t" style="left:144.5px;top:399.84px;font-size:12px;line-height:14px;;transform:scaleX(0.8994);transform-origin:0 0">A.06 - LEVEL 6</div>
<svg style="position:absolute;left:129px;top:420.7px" width="8" height="8" viewBox="0 0 8 8"><polygon points="6.5,0.5 6.5,6.3 0.5,6.3" fill="#404040"/></svg>
<div class="t" style="left:144.5px;top:418.84px;font-size:12px;line-height:14px;;transform:scaleX(0.8994);transform-origin:0 0">A.07 - LEVEL 7</div>
<div class="t" style="left:163.5px;top:437.84px;font-size:12px;line-height:14px;;transform:scaleX(0.9804);transform-origin:0 0">A.07.01 - Hotel Standard</div>
<div style="position:absolute;left:161px;top:454px;width:134px;height:18px;background:#e9e9e9;border:1px solid #c9c9c9;border-radius:2px;box-sizing:border-box"></div>
<div class="t" style="left:163.5px;top:456.84px;font-size:12px;line-height:14px;;transform:scaleX(0.9856);transform-origin:0 0">A.07.02 - Hotel Premium</div>
<div class="t" style="left:163.5px;top:475.84px;font-size:12px;line-height:14px;;transform:scaleX(0.9580);transform-origin:0 0">A.07.03 - T&amp;E</div>
<svg style="position:absolute;left:132px;top:497.2px" width="6" height="10" viewBox="0 0 6 10"><polygon points="0.5,0.5 4.5,4.2 0.5,7.9" fill="#fff" stroke="#999" stroke-width="0.9"/></svg>
<div class="t" style="left:144.5px;top:494.84px;font-size:12px;line-height:14px;;transform:scaleX(0.8994);transform-origin:0 0">A.08 - LEVEL 8</div>
<svg style="position:absolute;left:132px;top:516.2px" width="6" height="10" viewBox="0 0 6 10"><polygon points="0.5,0.5 4.5,4.2 0.5,7.9" fill="#fff" stroke="#999" stroke-width="0.9"/></svg>
<div class="t" style="left:144.5px;top:513.84px;font-size:12px;line-height:14px;;transform:scaleX(0.8994);transform-origin:0 0">A.09 - LEVEL 9</div>
<svg style="position:absolute;left:132px;top:535.2px" width="6" height="10" viewBox="0 0 6 10"><polygon points="0.5,0.5 4.5,4.2 0.5,7.9" fill="#fff" stroke="#999" stroke-width="0.9"/></svg>
<div class="t" style="left:144.5px;top:532.84px;font-size:12px;line-height:14px;;transform:scaleX(0.9218);transform-origin:0 0">A.10 - LEVEL 10</div>
<svg style="position:absolute;left:132px;top:554.2px" width="6" height="10" viewBox="0 0 6 10"><polygon points="0.5,0.5 4.5,4.2 0.5,7.9" fill="#fff" stroke="#999" stroke-width="0.9"/></svg>
<div class="t" style="left:144.5px;top:551.84px;font-size:12px;line-height:14px;;transform:scaleX(0.9407);transform-origin:0 0">A.11 - LEVEL 11</div>
<div style="position:absolute;left:315px;top:118px;width:189px;height:24px;background:#fff;border:1px solid #8f8f8f;border-bottom:none;box-sizing:border-box"></div>
<div class="t" style="left:321.6px;top:124.54px;font-size:12px;line-height:14px;;transform:scaleX(0.9793);transform-origin:0 0">Rooms [A.07.02 - Hotel Premium]</div>
<div style="position:absolute;left:315px;top:141px;width:429px;height:326px;background:#fff;border:1px solid #8f8f8f;box-sizing:border-box"></div>
<div style="position:absolute;left:316px;top:141px;width:187px;height:1px;background:#fff"></div>
<div style="position:absolute;left:317px;top:142px;width:426px;height:21px;background:linear-gradient(#ffffff,#f6f8fa);border-bottom:1px solid #d5d5d5;box-sizing:border-box"></div>
<div style="position:absolute;left:418px;top:143px;width:1px;height:19px;background:#e3e3e3"></div>
<div style="position:absolute;left:518px;top:143px;width:1px;height:19px;background:#e3e3e3"></div>
<div class="t" style="left:321.6px;top:146.34px;font-size:12px;line-height:14px;;transform:scaleX(0.9808);transform-origin:0 0">Room Function #:</div>
<div class="t" style="left:421.3px;top:146.34px;font-size:12px;line-height:14px;;transform:scaleX(0.9919);transform-origin:0 0">Room Number</div>
<div class="t" style="left:521.6px;top:146.34px;font-size:12px;line-height:14px;;transform:scaleX(0.9862);transform-origin:0 0">Room Name and Room Description</div>
<div style="position:absolute;left:317px;top:201px;width:426px;height:18px;background:linear-gradient(#f4f4f4,#e6e6e6 60%,#dcdcdc)"></div>
<div class="t" style="left:323.2px;top:166.34px;font-size:12px;line-height:14px;;transform:scaleX(0.9315);transform-origin:0 0">A.07.02.007</div>
<div class="t" style="left:423.2px;top:166.34px;font-size:12px;line-height:14px;;transform:scaleX(0.9579);transform-origin:0 0">L7-016</div>
<div class="t" style="left:522.9px;top:166.34px;font-size:12px;line-height:14px;;transform:scaleX(0.9188);transform-origin:0 0">PREMIUM BED 1</div>
<div class="t" style="left:323.2px;top:185.34px;font-size:12px;line-height:14px;;transform:scaleX(0.9315);transform-origin:0 0">A.07.02.008</div>
<div class="t" style="left:423.2px;top:185.34px;font-size:12px;line-height:14px;;transform:scaleX(0.9579);transform-origin:0 0">L7-010</div>
<div class="t" style="left:522.9px;top:185.34px;font-size:12px;line-height:14px;;transform:scaleX(0.9288);transform-origin:0 0">PREMIUM E/S 3</div>
<div class="t" style="left:323.2px;top:204.34px;font-size:12px;line-height:14px;;transform:scaleX(0.9315);transform-origin:0 0">A.07.02.001</div>
<div class="t" style="left:423.2px;top:204.34px;font-size:12px;line-height:14px;;transform:scaleX(0.9579);transform-origin:0 0">L7-016</div>
<div class="t" style="left:522.9px;top:204.34px;font-size:12px;line-height:14px;;transform:scaleX(0.9188);transform-origin:0 0">PREMIUM BED 3</div>
<div class="t" style="left:323.2px;top:223.34px;font-size:12px;line-height:14px;;transform:scaleX(0.9315);transform-origin:0 0">A.07.02.002</div>
<div class="t" style="left:423.2px;top:223.34px;font-size:12px;line-height:14px;;transform:scaleX(0.9579);transform-origin:0 0">L7-017</div>
<div class="t" style="left:522.9px;top:223.34px;font-size:12px;line-height:14px;;transform:scaleX(0.9288);transform-origin:0 0">PREMIUM E/S 1</div>
<div class="t" style="left:323.2px;top:242.34px;font-size:12px;line-height:14px;;transform:scaleX(0.9315);transform-origin:0 0">A.07.02.003</div>
<div class="t" style="left:423.2px;top:242.34px;font-size:12px;line-height:14px;;transform:scaleX(0.9579);transform-origin:0 0">L7-018</div>
<div class="t" style="left:522.9px;top:242.34px;font-size:12px;line-height:14px;;transform:scaleX(0.9201);transform-origin:0 0">PREMIUM BALCONY 1</div>
<div class="t" style="left:323.2px;top:261.34px;font-size:12px;line-height:14px;;transform:scaleX(0.9315);transform-origin:0 0">A.07.02.004</div>
<div class="t" style="left:423.2px;top:261.34px;font-size:12px;line-height:14px;;transform:scaleX(0.9579);transform-origin:0 0">L7-019</div>
<div class="t" style="left:522.9px;top:261.34px;font-size:12px;line-height:14px;;transform:scaleX(0.9188);transform-origin:0 0">PREMIUM BED 2</div>
<div class="t" style="left:323.2px;top:280.34px;font-size:12px;line-height:14px;;transform:scaleX(0.9315);transform-origin:0 0">A.07.02.005</div>
<div class="t" style="left:423.2px;top:280.34px;font-size:12px;line-height:14px;;transform:scaleX(0.9579);transform-origin:0 0">L7-020</div>
<div class="t" style="left:522.9px;top:280.34px;font-size:12px;line-height:14px;;transform:scaleX(0.9288);transform-origin:0 0">PREMIUM E/S 2</div>
<div class="t" style="left:323.2px;top:299.34px;font-size:12px;line-height:14px;;transform:scaleX(0.9315);transform-origin:0 0">A.07.02.006</div>
<div class="t" style="left:423.2px;top:299.34px;font-size:12px;line-height:14px;;transform:scaleX(0.9579);transform-origin:0 0">L7-021</div>
<div class="t" style="left:522.9px;top:299.34px;font-size:12px;line-height:14px;;transform:scaleX(0.9201);transform-origin:0 0">PREMIUM BALCONY 2</div>
<div style="position:absolute;left:316px;top:429px;width:427px;height:17px;background:#f0f0f0"></div>
<div style="position:absolute;left:333px;top:429px;width:146px;height:17px;background:#cdcdcd"></div>
<svg style="position:absolute;left:321px;top:433px" width="8" height="10" viewBox="0 0 8 10"><polyline points="5,1 1.5,5 5,9" fill="none" stroke="#9a9a9a" stroke-width="1"/></svg>
<svg style="position:absolute;left:730px;top:433px" width="8" height="10" viewBox="0 0 8 10"><polyline points="2,1 5.5,5 2,9" fill="none" stroke="#9a9a9a" stroke-width="1"/></svg>
<div style="position:absolute;left:316px;top:446px;width:427px;height:20px;background:#f5f5f5"></div>
<div class="t" style="left:321px;top:449.19px;font-size:11px;line-height:14px;;transform:scaleX(0.9262);transform-origin:0 0">8 of 8</div>
<svg style="position:absolute;left:725px;top:448px" width="16" height="16" viewBox="0 0 16 16"><rect x="0.5" y="4.5" width="4" height="10" fill="#fff" stroke="#666" stroke-width="0.8"/><rect x="10.5" y="4.5" width="4" height="10" fill="#fff" stroke="#666" stroke-width="0.8"/><rect x="5" y="1.5" width="5" height="12" fill="#e8502a" stroke="#666" stroke-width="0.8"/></svg>
<div style="position:absolute;left:315px;top:469px;width:260px;height:23px;background:#fff;border:1px solid #8f8f8f;border-bottom:none;box-sizing:border-box"></div>
<div class="t" style="left:321.5px;top:474.84px;font-size:12px;line-height:14px;;transform:scaleX(0.9482);transform-origin:0 0">Room Data [A.07.02.001 - PREMIUM BED 3]</div>
<div style="position:absolute;left:315px;top:491px;width:429px;height:335px;background:#fff;border:1px solid #8f8f8f;box-sizing:border-box"></div>
<div style="position:absolute;left:316px;top:491px;width:258px;height:1px;background:#fff"></div>
<svg style="position:absolute;left:560px;top:476.5px" width="9" height="8" viewBox="0 0 9 8"><path d="M0.6,0.6L7.6,7.2M7.6,0.6L0.6,7.2" stroke="#000" stroke-width="1.6"/></svg>
<div class="t" style="left:624.6px;top:495.84px;font-size:12px;line-height:14px;-webkit-text-stroke:0.45px #000;text-decoration:underline;transform:scaleX(0.9828);transform-origin:0 0">Derived from HR-PRE</div>
<div style="position:absolute;left:318px;top:514px;width:53px;height:21px;background:linear-gradient(#f2f2f2,#e6e6e6);border:1px solid #acacac;box-sizing:border-box"></div>
<div class="t" style="left:327.0px;top:518.34px;font-size:12px;line-height:14px;;transform:scaleX(0.9995);transform-origin:0 0">Aircon</div>
<div style="position:absolute;left:370px;top:514px;width:99px;height:21px;background:linear-gradient(#f2f2f2,#e6e6e6);border:1px solid #acacac;box-sizing:border-box"></div>
<div style="position:absolute;left:381px;top:516.5px;width:2px;height:15.5px;background:#e81010"></div>
<div class="t" style="left:387.25px;top:518.34px;font-size:12px;line-height:14px;;transform:scaleX(1.0153);transform-origin:0 0">Elec+Lighting</div>
<div style="position:absolute;left:468px;top:514px;width:129px;height:21px;background:linear-gradient(#f2f2f2,#e6e6e6);border:1px solid #acacac;box-sizing:border-box"></div>
<div class="t" style="left:476.5px;top:518.34px;font-size:12px;line-height:14px;;transform:scaleX(0.9848);transform-origin:0 0">ICT, alarm and signal</div>
<div style="position:absolute;left:596px;top:514px;width:69px;height:21px;background:linear-gradient(#f2f2f2,#e6e6e6);border:1px solid #acacac;box-sizing:border-box"></div>
<div class="t" style="left:605.0px;top:518.34px;font-size:12px;line-height:14px;;transform:scaleX(0.9735);transform-origin:0 0">Acoustics</div>
<div style="position:absolute;left:664px;top:514px;width:78px;height:21px;background:linear-gradient(#f2f2f2,#e6e6e6);border:1px solid #acacac;box-sizing:border-box"></div>
<div class="t" style="left:673.5px;top:518.34px;font-size:12px;line-height:14px;;transform:scaleX(0.9880);transform-origin:0 0">Operations</div>
<div style="position:absolute;left:318px;top:534px;width:43px;height:21px;background:linear-gradient(#f2f2f2,#e6e6e6);border:1px solid #acacac;box-sizing:border-box"></div>
<div class="t" style="left:329.5px;top:538.34px;font-size:12px;line-height:14px;;transform:scaleX(0.9191);transform-origin:0 0">Fire</div>
<div style="position:absolute;left:360px;top:534px;width:67px;height:21px;background:linear-gradient(#f2f2f2,#e6e6e6);border:1px solid #acacac;box-sizing:border-box"></div>
<div class="t" style="left:370.0px;top:538.34px;font-size:12px;line-height:14px;;transform:scaleX(1.0294);transform-origin:0 0">Hazards</div>
<div style="position:absolute;left:426px;top:534px;width:73px;height:21px;background:linear-gradient(#f2f2f2,#e6e6e6);border:1px solid #acacac;box-sizing:border-box"></div>
<div class="t" style="left:438.5px;top:538.34px;font-size:12px;line-height:14px;;transform:scaleX(0.9921);transform-origin:0 0">Approval</div>
<div style="position:absolute;left:498px;top:534px;width:67px;height:21px;background:linear-gradient(#f2f2f2,#e6e6e6);border:1px solid #acacac;box-sizing:border-box"></div>
<div class="t" style="left:509.5px;top:538.34px;font-size:12px;line-height:14px;;transform:scaleX(1.0452);transform-origin:0 0">Sign-off</div>
<div style="position:absolute;left:564px;top:534px;width:85px;height:21px;background:linear-gradient(#f2f2f2,#e6e6e6);border:1px solid #acacac;box-sizing:border-box"></div>
<div class="t" style="left:576.5px;top:538.34px;font-size:12px;line-height:14px;;transform:scaleX(0.9407);transform-origin:0 0">Acceptance</div>
<div style="position:absolute;left:648px;top:534px;width:94px;height:21px;background:linear-gradient(#f2f2f2,#e6e6e6);border:1px solid #acacac;box-sizing:border-box"></div>
<div class="t" style="left:660.75px;top:538.34px;font-size:12px;line-height:14px;;transform:scaleX(0.9639);transform-origin:0 0">Model Check</div>
<div style="position:absolute;left:318px;top:555px;width:96px;height:20px;background:linear-gradient(#f2f2f2,#e6e6e6);border:1px solid #acacac;box-sizing:border-box"></div>
<div style="position:absolute;left:331px;top:557.5px;width:2px;height:14.5px;background:#e81010"></div>
<div class="t" style="left:341.0px;top:558.34px;font-size:12px;line-height:14px;;transform:scaleX(0.9828);transform-origin:0 0">Description</div>
<div style="position:absolute;left:530px;top:555px;width:133px;height:20px;background:linear-gradient(#f2f2f2,#e6e6e6);border:1px solid #acacac;box-sizing:border-box"></div>
<div class="t" style="left:544.25px;top:558.34px;font-size:12px;line-height:14px;;transform:scaleX(0.9821);transform-origin:0 0">Windows and doors</div>
<div style="position:absolute;left:662px;top:555px;width:80px;height:20px;background:linear-gradient(#f2f2f2,#e6e6e6);border:1px solid #acacac;box-sizing:border-box"></div>
<div class="t" style="left:676.5px;top:558.34px;font-size:12px;line-height:14px;;transform:scaleX(0.9997);transform-origin:0 0">Hydraulic</div>
<div style="position:absolute;left:316px;top:574px;width:427px;height:221px;background:#fff;border:1px solid #acacac;box-sizing:border-box"></div>
<div style="position:absolute;left:413px;top:552px;width:116px;height:24px;background:#fff;border:1px solid #acacac;border-bottom:none;box-sizing:border-box"></div>
<div class="t" style="left:429.5px;top:557.34px;font-size:12px;line-height:14px;;transform:scaleX(1.0114);transform-origin:0 0">Design/building</div>
<div style="position:absolute;left:414px;top:574px;width:115px;height:2px;background:#fff"></div>
<div style="position:absolute;left:320px;top:587px;width:415px;height:193px;border:1px solid #d5dfe5;border-bottom:none;border-radius:3px 3px 0 0;box-sizing:border-box"></div>
<div style="position:absolute;left:723px;top:577px;width:17px;height:216px;background:#f0f0f0"></div>
<div style="position:absolute;left:723px;top:594px;width:17px;height:88px;background:#cdcdcd"></div>
<svg style="position:absolute;left:726.5px;top:583.5px" width="10" height="7" viewBox="0 0 10 7"><polyline points="1.5,5 5,1.8 8.5,5" fill="none" stroke="#888" stroke-width="1.5"/></svg>
<svg style="position:absolute;left:726.5px;top:764px" width="10" height="7" viewBox="0 0 10 7"><polyline points="1.5,1.5 5,4.8 8.5,1.5" fill="none" stroke="#999" stroke-width="1.2"/></svg>
<div style="position:absolute;left:318px;top:775px;width:405px;height:17px;background:#f0f0f0"></div>
<div style="position:absolute;left:336px;top:775px;width:150px;height:17px;background:#cdcdcd"></div>
<svg style="position:absolute;left:323px;top:779px" width="8" height="10" viewBox="0 0 8 10"><polyline points="5,1 1.5,5 5,9" fill="none" stroke="#9a9a9a" stroke-width="1"/></svg>
<svg style="position:absolute;left:711px;top:779px" width="8" height="10" viewBox="0 0 8 10"><polyline points="2,1 5.5,5 2,9" fill="none" stroke="#9a9a9a" stroke-width="1"/></svg>
<div style="position:absolute;left:326px;top:582px;width:88px;height:12px;background:#fff"></div>
<div class="t" style="left:328.5px;top:579.84px;font-size:12px;line-height:14px;font-weight:bold;color:#1b95d6;transform:scaleX(0.9501);transform-origin:0 0">Considerations</div>
<div class="t" style="left:330.4px;top:603.34px;font-size:12px;line-height:14px;;transform:scaleX(0.9715);transform-origin:0 0">Special surface requirements</div>
<svg style="position:absolute;left:582px;top:605px" width="14" height="14" viewBox="0 0 14 14"><rect x="0.5" y="0.5" width="12.5" height="12.5" fill="#fff" stroke="#555" stroke-width="1"/></svg>
<div class="t" style="left:330.4px;top:628.49px;font-size:12px;line-height:14px;;transform:scaleX(0.9814);transform-origin:0 0">Special sound requirements</div>
<svg style="position:absolute;left:582px;top:630px" width="14" height="14" viewBox="0 0 14 14"><rect x="0.5" y="0.5" width="12.5" height="12.5" fill="#fff" stroke="#555" stroke-width="1"/><polyline points="2.8,7 5.5,10 10.8,3" fill="none" stroke="#1a1a1a" stroke-width="1.9"/></svg>
<div class="t" style="left:330.4px;top:653.64px;font-size:12px;line-height:14px;;transform:scaleX(1.0031);transform-origin:0 0">Protection against vibrations - in</div>
<svg style="position:absolute;left:582px;top:655px" width="14" height="14" viewBox="0 0 14 14"><rect x="0.5" y="0.5" width="12.5" height="12.5" fill="#fff" stroke="#555" stroke-width="1"/></svg>
<div class="t" style="left:330.4px;top:678.79px;font-size:12px;line-height:14px;;transform:scaleX(1.0106);transform-origin:0 0">Protection against vibrations - out</div>
<svg style="position:absolute;left:582px;top:680px" width="14" height="14" viewBox="0 0 14 14"><rect x="0.5" y="0.5" width="12.5" height="12.5" fill="#fff" stroke="#555" stroke-width="1"/></svg>
<div class="t" style="left:330.4px;top:703.94px;font-size:12px;line-height:14px;;transform:scaleX(1.0250);transform-origin:0 0">View/insight to other functions</div>
<svg style="position:absolute;left:582px;top:706px" width="14" height="14" viewBox="0 0 14 14"><rect x="0.5" y="0.5" width="12.5" height="12.5" fill="#fff" stroke="#555" stroke-width="1"/></svg>
<div class="t" style="left:330.4px;top:729.09px;font-size:12px;line-height:14px;;transform:scaleX(0.9754);transform-origin:0 0">Length</div>
<svg style="position:absolute;left:582px;top:731px" width="14" height="14" viewBox="0 0 14 14"><rect x="0.5" y="0.5" width="12.5" height="12.5" fill="#fff" stroke="#555" stroke-width="1"/><polyline points="2.8,7 5.5,10 10.8,3" fill="none" stroke="#1a1a1a" stroke-width="1.9"/></svg>
<div class="t" style="left:330.4px;top:754.24px;font-size:12px;line-height:14px;;transform:scaleX(1.0102);transform-origin:0 0">Width</div>
<svg style="position:absolute;left:582px;top:756px" width="14" height="14" viewBox="0 0 14 14"><rect x="0.5" y="0.5" width="12.5" height="12.5" fill="#fff" stroke="#555" stroke-width="1"/><polyline points="2.8,7 5.5,10 10.8,3" fill="none" stroke="#1a1a1a" stroke-width="1.9"/></svg>
<div style="position:absolute;left:605px;top:600px;width:113px;height:23px;background:#fff;border:1px solid #c8c8c8;box-sizing:border-box"></div>
<div style="position:absolute;left:605px;top:625px;width:113px;height:23px;background:#fff;border:1px solid #a9a9ae;box-sizing:border-box"></div>
<div class="t" style="left:610.8px;top:629.84px;font-size:12px;line-height:14px;;transform:scaleX(0.9861);transform-origin:0 0">Acoustic privacy</div>
<svg style="position:absolute;left:706px;top:636px" width="7" height="5" viewBox="0 0 7 5"><polyline points="0.8,1 3.5,3.8 6.2,1" fill="none" stroke="#555" stroke-width="1"/></svg>
<div style="position:absolute;left:605px;top:651px;width:113px;height:23px;background:#fff;border:1px solid #c8c8c8;box-sizing:border-box"></div>
<svg style="position:absolute;left:706px;top:661px" width="7" height="5" viewBox="0 0 7 5"><polyline points="0.8,1 3.5,3.8 6.2,1" fill="none" stroke="#c0c0c0" stroke-width="1"/></svg>
<div style="position:absolute;left:605px;top:676px;width:113px;height:23px;background:#fff;border:1px solid #c8c8c8;box-sizing:border-box"></div>
<svg style="position:absolute;left:706px;top:686px" width="7" height="5" viewBox="0 0 7 5"><polyline points="0.8,1 3.5,3.8 6.2,1" fill="none" stroke="#c0c0c0" stroke-width="1"/></svg>
<div style="position:absolute;left:605px;top:701px;width:113px;height:23px;background:#fff;border:1px solid #c8c8c8;box-sizing:border-box"></div>
<div style="position:absolute;left:605px;top:726px;width:60px;height:23px;background:#fff;border:1px solid #a9a9ae;box-sizing:border-box"></div>
<div class="t" style="left:640.7px;top:730.04px;font-size:12px;line-height:14px;;transform:scaleX(0.9204);transform-origin:0 0">8.00</div>
<div class="t" style="left:673.6px;top:730.04px;font-size:12px;line-height:14px;;transform:scaleX(0.9939);transform-origin:0 0">meter</div>
<div style="position:absolute;left:605px;top:751px;width:60px;height:23px;background:#fff;border:1px solid #a9a9ae;box-sizing:border-box"></div>
<div class="t" style="left:640.7px;top:755.14px;font-size:12px;line-height:14px;;transform:scaleX(0.9204);transform-origin:0 0">3.00</div>
<div class="t" style="left:673.6px;top:755.14px;font-size:12px;line-height:14px;;transform:scaleX(0.9939);transform-origin:0 0">meter</div>
<div style="position:absolute;left:658px;top:800px;width:80px;height:20px;background:#e1e1e1;border:1px solid #adadad;box-sizing:border-box"></div>
<div class="t" style="left:685.5px;top:803.84px;font-size:12px;line-height:14px;;transform:scaleX(0.9138);transform-origin:0 0">Save</div>
<div style="position:absolute;left:748px;top:120px;width:329px;height:706px;background:#f4f4f4;border:1px solid #8f8f8f;box-sizing:border-box"></div>
<div style="position:absolute;left:749px;top:121px;width:327px;height:21px;background:#f0f0f0;border-bottom:1px solid #9a9a9a;box-sizing:border-box"></div>
<div class="t" style="left:752.5px;top:124.84px;font-size:12px;line-height:14px;">Properties</div>
<svg style="position:absolute;left:1042.5px;top:126.5px" width="8" height="10" viewBox="0 0 8 10"><path d="M2.2,6.5V2.3Q2.2,0.7 3.8,0.7H4.4Q5.6,0.7 5.6,2.3V6.5" fill="none" stroke="#000" stroke-width="1.3"/><path d="M5.3,1.5V6.5" stroke="#000" stroke-width="1.2"/><path d="M0.3,6.6H7.5" stroke="#000" stroke-width="1.3"/><path d="M3.9,6.6V9.8" stroke="#000" stroke-width="1.2"/></svg>
<svg style="position:absolute;left:1062px;top:128px" width="9" height="8" viewBox="0 0 9 8"><path d="M0.8,0.6L7.6,6.8M7.6,0.6L0.8,6.8" stroke="#000" stroke-width="1.8"/></svg>
<svg style="position:absolute;left:769px;top:152px" width="32" height="32" viewBox="0 0 32 32"><g opacity="1" stroke-linejoin="round"><polygon points="0.6,8 16,0.6 16,17.5 0.6,25.2" fill="#fff" stroke="#2a2a2a" stroke-width="1.05"/><polygon points="16,0.6 31.4,8 31.4,25.2 16,17.5" fill="#fff" stroke="#2a2a2a" stroke-width="1.05"/><polygon points="0.6,25.2 16,17.5 31.4,25.2 16,31.4" fill="#ee6933" stroke="#2a2a2a" stroke-width="1.05"/><polyline points="5.5,23 5.5,10.3 11.4,7.3 11.4,20.3" fill="none" stroke="#2a2a2a" stroke-width="1.05"/><polygon points="19.7,6.9 28.7,11.4 28.7,18.6 19.7,14.2" fill="none" stroke="#2a2a2a" stroke-width="1.05"/></g></svg>
<div style="position:absolute;left:817px;top:148px;width:254px;height:20px;overflow:hidden">
<div class="t" style="left:0;top:2.65px;font-size:14px;line-height:16px;font-weight:bold;transform:scaleX(1.168);transform-origin:0 0">Room A.07.02.001 / L7-016 PREMIUM BED 3</div>
</div>
<div class="t" style="left:816.2px;top:170.34px;font-size:12px;line-height:14px;font-style:italic;transform:scaleX(0.9649);transform-origin:0 0">A.07.02: Building A / LEVEL 7 / Hotel Premium</div>
<div class="t" style="left:816.2px;top:186.34px;font-size:12px;line-height:14px;font-style:italic;transform:scaleX(0.9566);transform-origin:0 0">Created: 9/02/2017 4:31:36 PM Chris Razzell</div>
<div class="t" style="left:816.2px;top:202.34px;font-size:12px;line-height:14px;font-style:italic;transform:scaleX(0.9652);transform-origin:0 0">Updated: 13/09/2018 2:47:24 PM Dipesh Thapa</div>
<div style="position:absolute;left:1054px;top:216px;width:17px;height:574px;background:#ececec"></div>
<div style="position:absolute;left:1054px;top:233px;width:17px;height:383px;background:#cdcdcd"></div>
<svg style="position:absolute;left:1058px;top:221px" width="10" height="7" viewBox="0 0 10 7"><polyline points="1,5.5 5,1.5 9,5.5" fill="none" stroke="#a0a0a0" stroke-width="1"/></svg>
<svg style="position:absolute;left:1058px;top:778px" width="10" height="7" viewBox="0 0 10 7"><polyline points="1,1.5 5,5.5 9,1.5" fill="none" stroke="#a0a0a0" stroke-width="1"/></svg>
<div style="position:absolute;left:749px;top:216px;width:305px;height:573px;overflow:hidden">
<div style="position:absolute;left:6px;top:11px;width:298px;height:195px;border:1px solid #d5dfe5;border-radius:3px;box-sizing:border-box"></div>
<div style="position:absolute;left:12px;top:5px;width:116px;height:12px;background:#f4f4f4"></div>
<div class="t" style="left:15px;top:3.34px;font-size:12px;line-height:14px;font-weight:bold;color:#1b95d6;transform:scaleX(0.9938);transform-origin:0 0">Name and Numbers</div>
<div class="t" style="left:16.200000000000045px;top:26.34px;font-size:12px;line-height:14px;;transform:scaleX(0.9850);transform-origin:0 0">Room Function #:</div>
<div class="t" style="left:16.200000000000045px;top:51.34px;font-size:12px;line-height:14px;;transform:scaleX(0.9798);transform-origin:0 0">Room Name</div>
<div class="t" style="left:16.200000000000045px;top:76.34px;font-size:12px;line-height:14px;;transform:scaleX(0.9907);transform-origin:0 0">Room Name Description</div>
<div class="t" style="left:16.200000000000045px;top:101.34px;font-size:12px;line-height:14px;;transform:scaleX(0.9983);transform-origin:0 0">Room Number</div>
<div class="t" style="left:16.200000000000045px;top:126.34px;font-size:12px;line-height:14px;;transform:scaleX(0.9840);transform-origin:0 0">User Room Number</div>
<div class="t" style="left:16.200000000000045px;top:151.34px;font-size:12px;line-height:14px;;transform:scaleX(1.0170);transform-origin:0 0">Additional Number:</div>
<div class="t" style="left:16.200000000000045px;top:176.34px;font-size:12px;line-height:14px;;transform:scaleX(0.9974);transform-origin:0 0">Name on Drawing</div>
<div style="position:absolute;left:154px;top:23px;width:139px;height:23px;background:#f3f3f3;border:1px solid #ababab;box-sizing:border-box"></div>
<div class="t" style="left:157px;top:26.34px;font-size:12px;line-height:14px;;transform:scaleX(0.9423);transform-origin:0 0">A.07.02.001</div>
<div style="position:absolute;left:154px;top:48px;width:139px;height:23px;background:#fff;border:1px solid #ababab;box-sizing:border-box"></div>
<div class="t" style="left:159px;top:52.84px;font-size:12px;line-height:14px;;transform:scaleX(0.9135);transform-origin:0 0">PREMIUM BED 3</div>
<svg style="position:absolute;left:280.5px;top:56.5px" width="7" height="5" viewBox="0 0 7 5"><polyline points="1,1 3.5,3.6 6,1" fill="none" stroke="#444" stroke-width="1.2"/></svg>
<div style="position:absolute;left:154px;top:73px;width:139px;height:23px;background:#fff;border:1px solid #ababab;box-sizing:border-box"></div>
<svg style="position:absolute;left:280.5px;top:81.5px" width="7" height="5" viewBox="0 0 7 5"><polyline points="1,1 3.5,3.6 6,1" fill="none" stroke="#444" stroke-width="1.2"/></svg>
<div style="position:absolute;left:154px;top:98px;width:139px;height:23px;background:#fff;border:1px solid #ababab;box-sizing:border-box"></div>
<div class="t" style="left:157px;top:101.34px;font-size:12px;line-height:14px;;transform:scaleX(0.9632);transform-origin:0 0">L7-016</div>
<div style="position:absolute;left:154px;top:124px;width:139px;height:23px;background:#fff;border:1px solid #ababab;box-sizing:border-box"></div>
<div style="position:absolute;left:153px;top:123px;width:141px;height:24px;border:3px solid #e8403f;box-sizing:border-box;box-shadow:0 2px 3px rgba(0,0,0,0.25)"></div>
<div class="t" style="left:157px;top:126.34px;font-size:12px;line-height:14px;;transform:scaleX(0.9485);transform-origin:0 0">123</div>
<div style="position:absolute;left:154px;top:148px;width:139px;height:23px;background:#fff;border:1px solid #ababab;box-sizing:border-box"></div>
<div style="position:absolute;left:154px;top:173px;width:139px;height:23px;background:#fff;border:1px solid #ababab;box-sizing:border-box"></div>
<div style="position:absolute;left:7px;top:218px;width:297px;height:98px;border:1px solid #d5dfe5;border-radius:3px;box-sizing:border-box"></div>
<div style="position:absolute;left:13px;top:212px;width:31px;height:12px;background:#f4f4f4"></div>
<div class="t" style="left:14.600000000000023px;top:211.34px;font-size:12px;line-height:14px;font-weight:bold;color:#1b95d6;transform:scaleX(1.0123);transform-origin:0 0">Note</div>
<div style="position:absolute;left:19px;top:231px;width:274px;height:75px;background:#fffde3;border:1px solid #a5a5a5;box-sizing:border-box"></div>
<div class="t" style="left:22.399999999999977px;top:234.34px;font-size:12px;line-height:14px;;transform:scaleX(0.9835);transform-origin:0 0">Engineer please review this space for heat gain</div>
<div style="position:absolute;left:7px;top:329px;width:297px;height:195px;border:1px solid #d5dfe5;border-radius:3px;box-sizing:border-box"></div>
<div style="position:absolute;left:13px;top:323px;width:44px;height:12px;background:#f4f4f4"></div>
<div class="t" style="left:14.600000000000023px;top:321.34px;font-size:12px;line-height:14px;font-weight:bold;color:#1b95d6;transform:scaleX(0.9374);transform-origin:0 0">Groups</div>
<div class="t" style="left:16.200000000000045px;top:343.84px;font-size:12px;line-height:14px;;transform:scaleX(0.9701);transform-origin:0 0">Construction Phase</div>
<div style="position:absolute;left:154px;top:341px;width:139px;height:23px;background:linear-gradient(#f2f2f2,#e4e4e4);border:1px solid #acacac;box-sizing:border-box"></div>
<div class="t" style="left:160.20000000000005px;top:345.84px;font-size:12px;line-height:14px;;transform:scaleX(0.9649);transform-origin:0 0">Phase 1</div>
<svg style="position:absolute;left:280.5px;top:348.5px" width="7" height="5" viewBox="0 0 7 5"><polyline points="1,1 3.5,3.6 6,1" fill="none" stroke="#444" stroke-width="1.2"/></svg>
<div class="t" style="left:16.200000000000045px;top:368.84px;font-size:12px;line-height:14px;;transform:scaleX(0.9900);transform-origin:0 0">Consultant</div>
<div style="position:absolute;left:154px;top:366px;width:139px;height:23px;background:linear-gradient(#f2f2f2,#e4e4e4);border:1px solid #acacac;box-sizing:border-box"></div>
<div class="t" style="left:160.20000000000005px;top:370.84px;font-size:12px;line-height:14px;;transform:scaleX(1.0127);transform-origin:0 0">HSA</div>
<svg style="position:absolute;left:280.5px;top:373.5px" width="7" height="5" viewBox="0 0 7 5"><polyline points="1,1 3.5,3.6 6,1" fill="none" stroke="#444" stroke-width="1.2"/></svg>
<div class="t" style="left:16.200000000000045px;top:393.84px;font-size:12px;line-height:14px;;transform:scaleX(1.0021);transform-origin:0 0">Delivery month</div>
<div style="position:absolute;left:154px;top:391px;width:139px;height:23px;background:linear-gradient(#f2f2f2,#e4e4e4);border:1px solid #acacac;box-sizing:border-box"></div>
<div class="t" style="left:160.20000000000005px;top:395.84px;font-size:12px;line-height:14px;;transform:scaleX(0.9924);transform-origin:0 0">Aug 2018</div>
<svg style="position:absolute;left:280.5px;top:398.5px" width="7" height="5" viewBox="0 0 7 5"><polyline points="1,1 3.5,3.6 6,1" fill="none" stroke="#444" stroke-width="1.2"/></svg>
<div class="t" style="left:16.200000000000045px;top:418.84px;font-size:12px;line-height:14px;;transform:scaleX(0.9349);transform-origin:0 0">RDS-Arch</div>
<div style="position:absolute;left:154px;top:416px;width:139px;height:23px;background:linear-gradient(#f2f2f2,#e4e4e4);border:1px solid #acacac;box-sizing:border-box"></div>
<svg style="position:absolute;left:280.5px;top:423.5px" width="7" height="5" viewBox="0 0 7 5"><polyline points="1,1 3.5,3.6 6,1" fill="none" stroke="#444" stroke-width="1.2"/></svg>
<div class="t" style="left:16.200000000000045px;top:443.84px;font-size:12px;line-height:14px;;transform:scaleX(0.9075);transform-origin:0 0">RDS-Eng</div>
<div style="position:absolute;left:154px;top:441px;width:139px;height:23px;background:linear-gradient(#f2f2f2,#e4e4e4);border:1px solid #acacac;box-sizing:border-box"></div>
<svg style="position:absolute;left:280.5px;top:448.5px" width="7" height="5" viewBox="0 0 7 5"><polyline points="1,1 3.5,3.6 6,1" fill="none" stroke="#444" stroke-width="1.2"/></svg>
<div class="t" style="left:16.200000000000045px;top:468.84px;font-size:12px;line-height:14px;;transform:scaleX(0.9943);transform-origin:0 0">Revit Model</div>
<div style="position:absolute;left:154px;top:466px;width:139px;height:23px;background:linear-gradient(#f2f2f2,#e4e4e4);border:1px solid #acacac;box-sizing:border-box"></div>
<svg style="position:absolute;left:280.5px;top:473.5px" width="7" height="5" viewBox="0 0 7 5"><polyline points="1,1 3.5,3.6 6,1" fill="none" stroke="#444" stroke-width="1.2"/></svg>
<div class="t" style="left:16.200000000000045px;top:493.84px;font-size:12px;line-height:14px;;transform:scaleX(0.9371);transform-origin:0 0">Space Type</div>
<div style="position:absolute;left:154px;top:491px;width:139px;height:23px;background:linear-gradient(#f2f2f2,#e4e4e4);border:1px solid #acacac;box-sizing:border-box"></div>
<div class="t" style="left:160.20000000000005px;top:495.84px;font-size:12px;line-height:14px;;transform:scaleX(1.1065);transform-origin:0 0">Hotel</div>
<svg style="position:absolute;left:280.5px;top:498.5px" width="7" height="5" viewBox="0 0 7 5"><polyline points="1,1 3.5,3.6 6,1" fill="none" stroke="#444" stroke-width="1.2"/></svg>
<div style="position:absolute;left:153.5px;top:341px;width:140.0px;height:24px;border:3px solid #e8403f;box-sizing:border-box;box-shadow:0 2px 3px rgba(0,0,0,0.25)"></div>
<div style="position:absolute;left:7px;top:536px;width:297px;height:48px;border:1px solid #d5dfe5;border-radius:3px;box-sizing:border-box"></div>
<div style="position:absolute;left:13px;top:530px;width:145px;height:12px;background:#f4f4f4"></div>
<div class="t" style="left:14.899999999999977px;top:529.84px;font-size:12px;line-height:14px;font-weight:bold;color:#1b95d6;transform:scaleX(0.9697);transform-origin:0 0">Areas and Measurements</div>
<div class="t" style="left:16.200000000000045px;top:551.84px;font-size:12px;line-height:14px;;transform:scaleX(0.9929);transform-origin:0 0">Programmed Area</div>
<div style="position:absolute;left:154px;top:549px;width:120px;height:24px;background:#fff;border:1px solid #ababab;box-sizing:border-box"></div>
<div class="t" style="left:242.60000000000002px;top:552.34px;font-size:12px;line-height:14px;;transform:scaleX(0.9324);transform-origin:0 0">27.00</div>
</div>
<div style="position:absolute;left:896px;top:795px;width:80px;height:20px;background:#f4f4f4;border:1px solid #bfbfbf;box-sizing:border-box"></div>
<div class="t" style="left:921.5px;top:798.84px;font-size:12px;line-height:14px;color:#a0a0a0;transform:scaleX(1.0109);transform-origin:0 0">Undo</div>
<div style="position:absolute;left:986px;top:795px;width:80px;height:20px;background:#f4f4f4;border:1px solid #bfbfbf;box-sizing:border-box"></div>
<div class="t" style="left:1013.5px;top:798.84px;font-size:12px;line-height:14px;color:#a0a0a0;transform:scaleX(0.9138);transform-origin:0 0">Save</div>
<div style="position:absolute;left:1083px;top:115px;width:54px;height:714px;background:#f5f5f5"></div>
<div style="position:absolute;left:1082px;top:115px;width:1px;height:714px;background:#8a8a8a"></div>
<div style="position:absolute;left:1083px;top:148px;width:54px;height:68px;background:#d9d9d9"></div>
<div style="position:absolute;left:1134px;top:148px;width:3px;height:68px;background:#ee6933"></div>
<svg style="position:absolute;left:1084px;top:115px" width="53" height="140" viewBox="0 0 53 140"><g fill="none" stroke="#3a3a3a" stroke-width="1.1"><rect x="7" y="6.3" width="24" height="17.4"/><path d="M7,12.2H31M14.7,12.2V23.7M14.7,17.9H31"/></g><polygon points="43.5,14 49.5,14 46.5,17" fill="#1a1a1a"/><circle cx="24.5" cy="50.2" r="12" fill="none" stroke="#3a3a3a" stroke-width="1.1"/><circle cx="24.5" cy="43.2" r="1.7" fill="#1a1a1a"/><path d="M21.5,47.5H25.5V57M21.5,57.5H28" fill="none" stroke="#1a1a1a" stroke-width="2.2"/><polygon points="24.5,71.5 36.5,78 36.5,90 24.5,96.5 12.5,90 12.5,78" fill="#fff" stroke="#3a3a3a" stroke-width="1.1"/><path d="M19.5,77H26.5L29.5,80V91.5H19.5Z" fill="#fff" stroke="#3a3a3a" stroke-width="1"/><path d="M26.5,77V80H29.5" fill="none" stroke="#3a3a3a" stroke-width="0.8"/><path d="M21.5,83.5H27.5M21.5,85.8H27.5M21.5,88.1H27.5" stroke="#3a3a3a" stroke-width="0.9"/><g fill="none" stroke="#3a3a3a" stroke-width="1.1" stroke-linejoin="round"><polygon points="26,106.5 37.5,112.5 37.5,124.5 26,130.5 14.5,124.5 14.5,112.5"/><path d="M26,106.5V113.5M14.5,124.5L20,121.5M37.5,124.5L32,121.5M26,130.5V127"/><polygon points="26,113.5 32,116.5 32,122.5 26,125.5 20,122.5 20,116.5" fill="#fff"/><path d="M20,116.5L26,119.5L32,116.5M26,119.5V125.5"/></g></svg>
<svg style="position:absolute;left:1084px;top:245px" width="53" height="140" viewBox="0 0 53 140"><g fill="none" stroke="#3a3a3a" stroke-width="1.1" stroke-linejoin="round"><path d="M15,14.5Q15,13.5 16,13.5H22L24,10.5H33L35,13.5H38Q39,13.5 39,14.5V27.5Q39,28.5 38,28.5H16Q15,28.5 15,27.5Z" fill="#fff"/><circle cx="29.5" cy="20.5" r="5"/><circle cx="29.5" cy="20.5" r="3"/><circle cx="18.5" cy="17" r="1.3"/><path d="M14.5,44.5H28.5L33.5,49.5V68.5H14.5Z" fill="#fff"/><path d="M28.5,44.5V49.5H33.5"/><path d="M21,56V48Q21,45.5 19,45.5Q17,45.5 17,48V57Q17,60 19.5,60Q22,60 22,57V50" stroke-width="1"/><path d="M15,78.5H28.5L33.5,83.5V102H15Z" fill="#fff"/><path d="M28.5,78.5V83.5H33.5"/><circle cx="24" cy="92" r="6"/><path d="M24,88V92.5H27.5"/></g><rect x="17" y="119" width="13.5" height="10" fill="#8a8a8a"/><path d="M16.5,130V112M14.5,114.5L16.5,111.8L18.5,114.5M16.5,130H37.5M35,128L38,130L35,132" fill="none" stroke="#3a3a3a" stroke-width="1.1"/></svg>
</body></html>
